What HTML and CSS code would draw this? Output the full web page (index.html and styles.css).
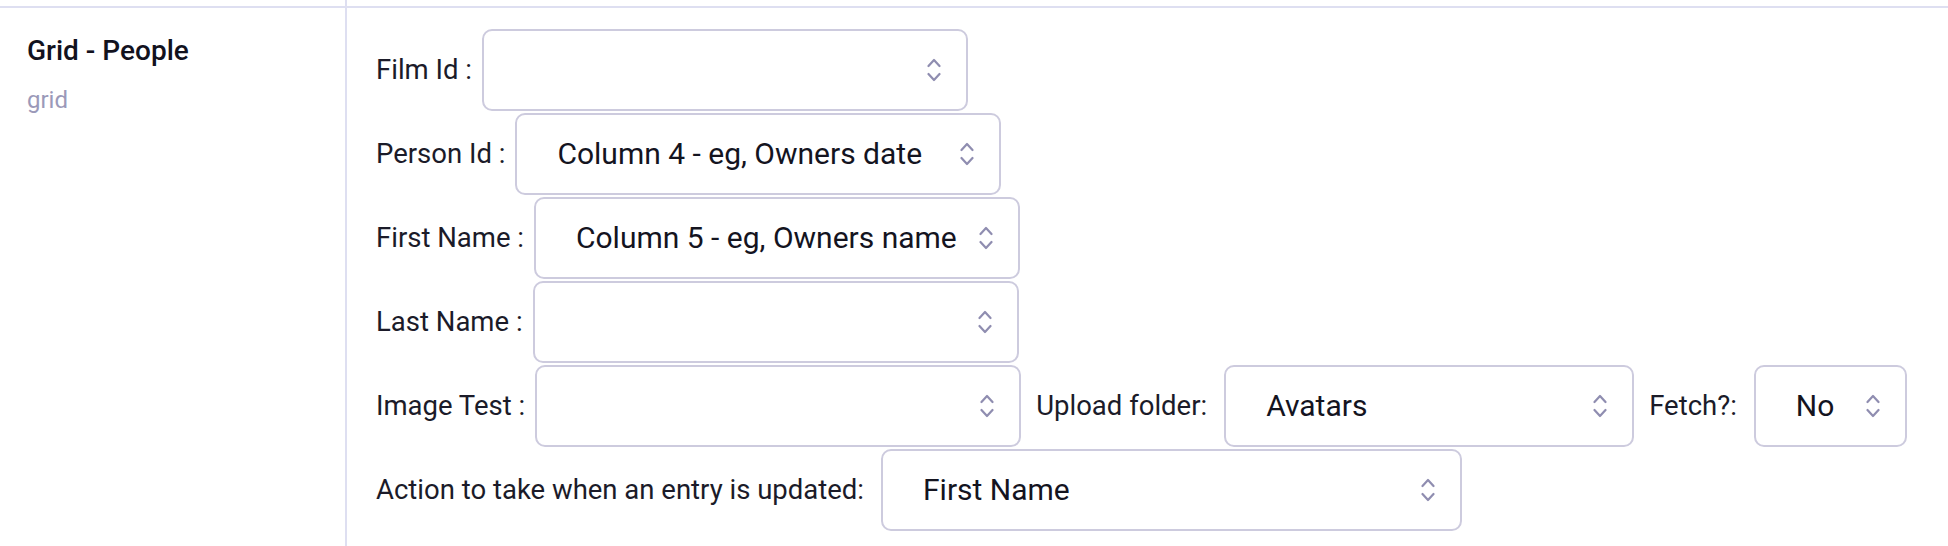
FILE: index.html
```html
<!DOCTYPE html>
<html lang="en">
<head>
<meta charset="utf-8">
<title>Grid - People</title>
<link rel="stylesheet" href="styles.css">
</head>
<body>
<div class="table">
  <div class="row row--prev">
    <div class="cell-left"></div>
    <div class="cell-right"></div>
  </div>
  <div class="row">
    <div class="cell-left">
      <div class="title">Grid - People</div>
      <div class="subtitle">grid</div>
    </div>
    <div class="cell-right form">
      <div class="field">
        <span class="label">Film Id :</span>
        <div class="select select--md"><span class="value"></span><svg class="chev" viewBox="0 0 14 24"><polyline points="1.5,8 7,2 12.5,8"/><polyline points="1.5,16 7,22 12.5,16"/></svg></div>
      </div>
      <div class="field">
        <span class="label">Person Id :</span>
        <div class="select select--md"><span class="value">Column 4 - eg, Owners date</span><svg class="chev" viewBox="0 0 14 24"><polyline points="1.5,8 7,2 12.5,8"/><polyline points="1.5,16 7,22 12.5,16"/></svg></div>
      </div>
      <div class="field">
        <span class="label">First Name :</span>
        <div class="select select--md"><span class="value">Column 5 - eg, Owners name</span><svg class="chev" viewBox="0 0 14 24"><polyline points="1.5,8 7,2 12.5,8"/><polyline points="1.5,16 7,22 12.5,16"/></svg></div>
      </div>
      <div class="field">
        <span class="label">Last Name :</span>
        <div class="select select--md"><span class="value"></span><svg class="chev" viewBox="0 0 14 24"><polyline points="1.5,8 7,2 12.5,8"/><polyline points="1.5,16 7,22 12.5,16"/></svg></div>
      </div>
      <div class="field">
        <span class="label">Image Test :</span>
        <div class="select select--md select--spaced"><span class="value"></span><svg class="chev" viewBox="0 0 14 24"><polyline points="1.5,8 7,2 12.5,8"/><polyline points="1.5,16 7,22 12.5,16"/></svg></div>
        <span class="label label--spaced">Upload folder:</span>
        <div class="select select--upload select--spaced"><span class="value">Avatars</span><svg class="chev" viewBox="0 0 14 24"><polyline points="1.5,8 7,2 12.5,8"/><polyline points="1.5,16 7,22 12.5,16"/></svg></div>
        <span class="label label--spaced">Fetch?:</span>
        <div class="select select--fetch"><span class="value">No</span><svg class="chev" viewBox="0 0 14 24"><polyline points="1.5,8 7,2 12.5,8"/><polyline points="1.5,16 7,22 12.5,16"/></svg></div>
      </div>
      <div class="field">
        <span class="label label--spaced">Action to take when an entry is updated:</span>
        <div class="select select--action"><span class="value">First Name</span><svg class="chev" viewBox="0 0 14 24"><polyline points="1.5,8 7,2 12.5,8"/><polyline points="1.5,16 7,22 12.5,16"/></svg></div>
      </div>
    </div>
  </div>
</div>
</body>
</html>
```
FILE: styles.css
```css
* { box-sizing: border-box; }

html, body {
  margin: 0;
  padding: 0;
  background: #ffffff;
}

body {
  font-family: Roboto, "Liberation Sans", Arial, sans-serif;
  color: #1b1b29;
}

.table {
  width: 100%;
}

.row {
  display: flex;
}

.row--prev {
  height: 8px;
  border-bottom: 2px solid #dedff1;
}

.cell-left {
  width: 347px;
  flex: 0 0 347px;
  border-right: 2px solid #dedff1;
}

.row > .cell-left {
  padding: 26px 0 0 27px;
}

.row--prev > .cell-left {
  padding: 0;
}

.cell-right {
  flex: 1 1 auto;
}

.title {
  font-size: 28px;
  line-height: 34px;
  font-weight: 500;
  color: #12121e;
}

.subtitle {
  margin-top: 17px;
  font-size: 24px;
  line-height: 30px;
  color: #9b99b9;
}

.form {
  padding: 21px 0 17px 29px;
  display: flex;
  flex-direction: column;
  gap: 2px;
}

.field {
  display: flex;
  align-items: center;
}

.label {
  font-size: 27.5px;
  line-height: 34px;
  color: #1b1b29;
  margin-right: 10px;
  white-space: nowrap;
}

.label--spaced {
  margin-right: 17px;
}

.select {
  height: 82px;
  border: 2px solid #cdcbde;
  border-radius: 10px;
  display: flex;
  align-items: center;
  justify-content: space-between;
  padding: 0 25px 0 40px;
  background: #ffffff;
}

.select--md { width: 486px; }
.select--upload { width: 410px; }
.select--fetch { width: 153px; }
.select--action { width: 581px; }

.select--spaced {
  margin-right: 15px;
}

.value {
  font-size: 30px;
  line-height: 36px;
  color: #14141f;
  white-space: nowrap;
}

.chev {
  width: 14px;
  height: 24px;
  flex: 0 0 14px;
  fill: none;
  stroke: #8f8db0;
  stroke-width: 2.2;
  stroke-linecap: round;
  stroke-linejoin: round;
}
```
